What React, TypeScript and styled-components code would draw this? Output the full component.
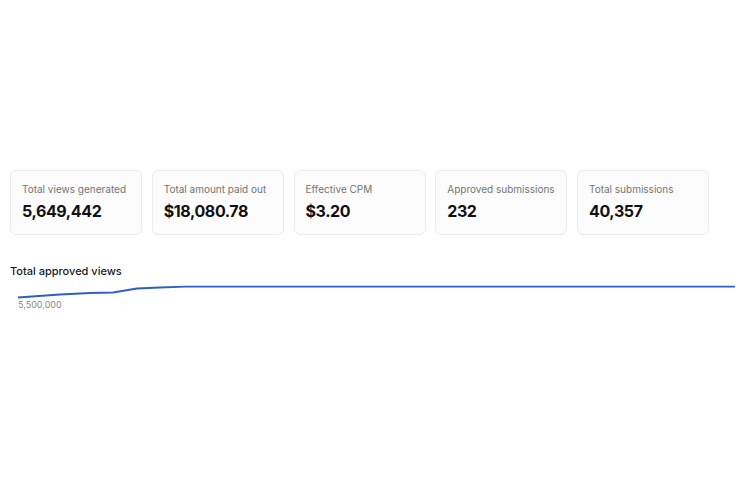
import styled, { createGlobalStyle } from "styled-components";

const GlobalStyle = createGlobalStyle`
  html, body {
    margin: 0;
    padding: 0;
    background: #ffffff;
    font-family: Inter, "Noto Sans", sans-serif;
  }
`;

const Page = styled.div`
  width: 750px;
  height: 500px;
  box-sizing: border-box;
  padding: 170px 0 0 10px;
  display: flex;
  flex-direction: column;
`;

const StatsRow = styled.div`
  display: flex;
  gap: 9.75px;
`;

const StatCard = styled.div`
  width: 132px;
  height: 65px;
  box-sizing: border-box;
  padding: 12px 11px 0;
  border: 1px solid #ececec;
  border-radius: 6px;
  background: #fcfcfc;
  display: flex;
  flex-direction: column;
  gap: 5px;
`;

const StatLabel = styled.div`
  font-size: 10px;
  line-height: 13px;
  color: #747474;
  white-space: nowrap;
`;

const StatValue = styled.div`
  font-size: 16px;
  line-height: 20px;
  font-weight: 700;
  color: #111111;
  letter-spacing: -0.4px;
`;

const ChartSection = styled.div`
  margin-top: 29px;
  display: flex;
  flex-direction: column;
`;

const ChartTitle = styled.div`
  font-size: 11px;
  line-height: 14px;
  color: #1a1a1a;
  font-weight: 500;
`;

const ChartArea = styled.div`
  position: relative;
  width: 730px;
  height: 40px;
  margin-top: 7px;
`;

const AxisLabel = styled.span`
  position: absolute;
  left: 8px;
  top: 14px;
  font-size: 9px;
  color: #8a8a8a;
`;

const stats = [
  { label: "Total views generated", value: "5,649,442" },
  { label: "Total amount paid out", value: "$18,080.78" },
  { label: "Effective CPM", value: "$3.20" },
  { label: "Approved submissions", value: "232" },
  { label: "Total submissions", value: "40,357" },
];

export default function App() {
  return (
    <>
      <GlobalStyle />
      <Page>
        <StatsRow>
          {stats.map((s) => (
            <StatCard key={s.label}>
              <StatLabel>{s.label}</StatLabel>
              <StatValue>{s.value}</StatValue>
            </StatCard>
          ))}
        </StatsRow>
        <ChartSection>
          <ChartTitle>Total approved views</ChartTitle>
          <ChartArea>
            <svg width="730" height="40" viewBox="0 0 730 40">
              <path
                d="M8 12.5 L50 9.5 L80 8 L103 7.5 L127 3.5 L150 2.5 L175 1.6 L725 1.6"
                fill="none"
                stroke="#2f5fc4"
                strokeWidth="1.9"
                strokeLinejoin="round"
              />
            </svg>
            <AxisLabel>5,500,000</AxisLabel>
          </ChartArea>
        </ChartSection>
      </Page>
    </>
  );
}
